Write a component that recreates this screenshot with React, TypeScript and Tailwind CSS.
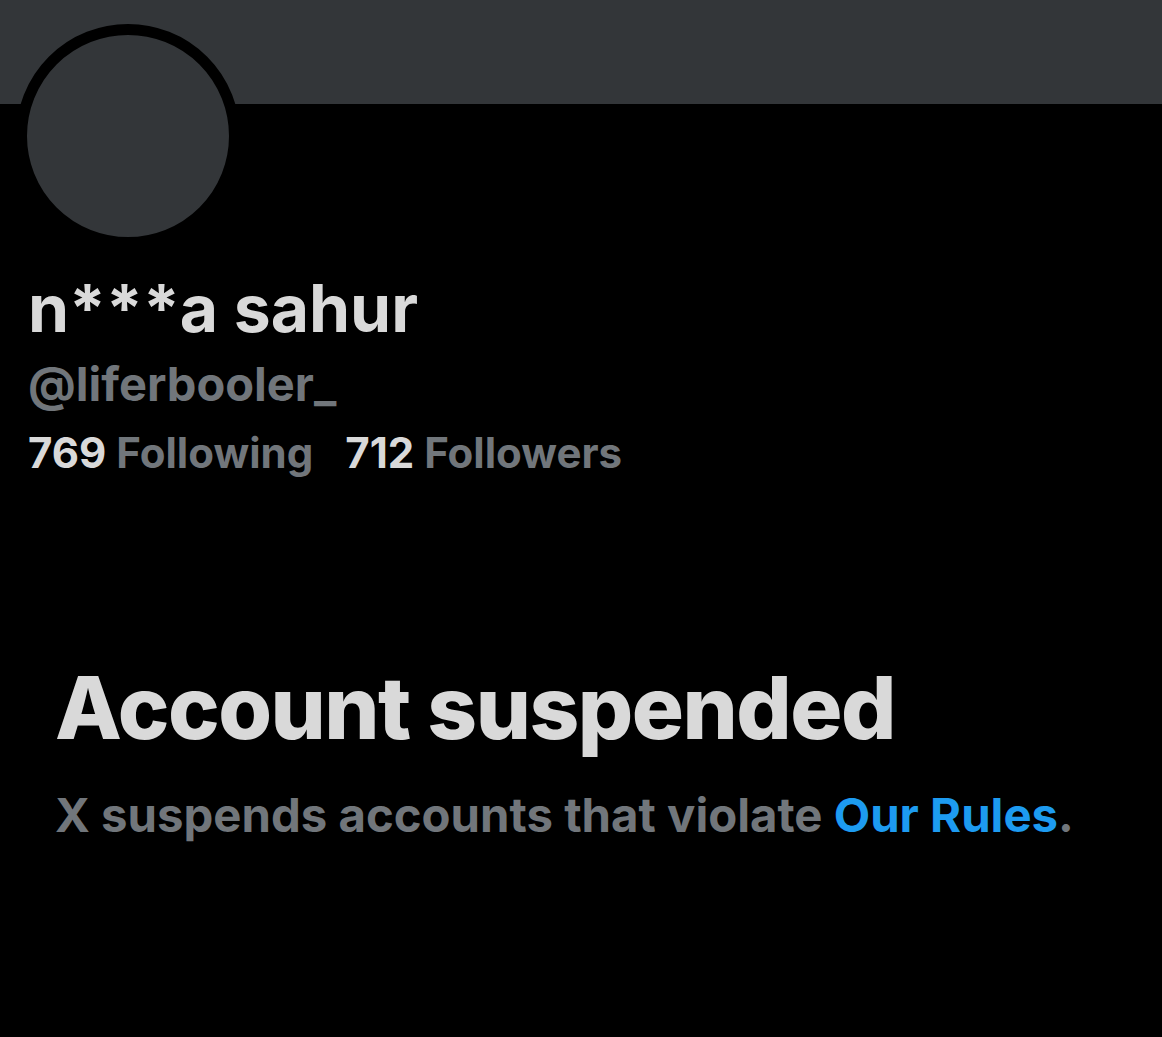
const font = { fontFamily: "Inter, 'Noto Sans', sans-serif" };

export default function App() {
  return (
    <div className="w-full h-[1037px] bg-black overflow-hidden" style={font}>
      {/* banner */}
      <div className="h-[104px] bg-[#333639]" />

      {/* avatar */}
      <div className="-mt-[80px] ml-[16px] w-[224px] h-[224px] rounded-full border-[11px] border-black bg-[#333639]" />

      {/* profile info */}
      <div className="pl-[28px] mt-[20px]">
        <h1 className="text-[66px] leading-[80px] font-bold text-[#d9d9d9]">
          n***a sahur
        </h1>
        <p className="text-[47px] leading-[72px] font-bold text-[#71767b]">
          @liferbooler_
        </p>
        <div className="flex gap-[32px] text-[42px] leading-[66px] font-bold">
          <span>
            <span className="text-[#d9d9d9]">769</span>{" "}
            <span className="text-[#71767b]">Following</span>
          </span>
          <span>
            <span className="text-[#d9d9d9]">712</span>{" "}
            <span className="text-[#71767b]">Followers</span>
          </span>
        </div>
      </div>

      {/* suspended notice */}
      <div className="pl-[55px] mt-[172px]">
        <h2 className="text-[87px] leading-[100px] font-extrabold text-[#d9d9d9] tracking-[-1.5px]">
          Account suspended
        </h2>
        <p className="mt-[27px] text-[47.3px] leading-[60px] font-bold text-[#71767b]">
          X suspends accounts that violate{" "}
          <span className="text-[#1d9bf0]">Our Rules</span>.
        </p>
      </div>
    </div>
  );
}
